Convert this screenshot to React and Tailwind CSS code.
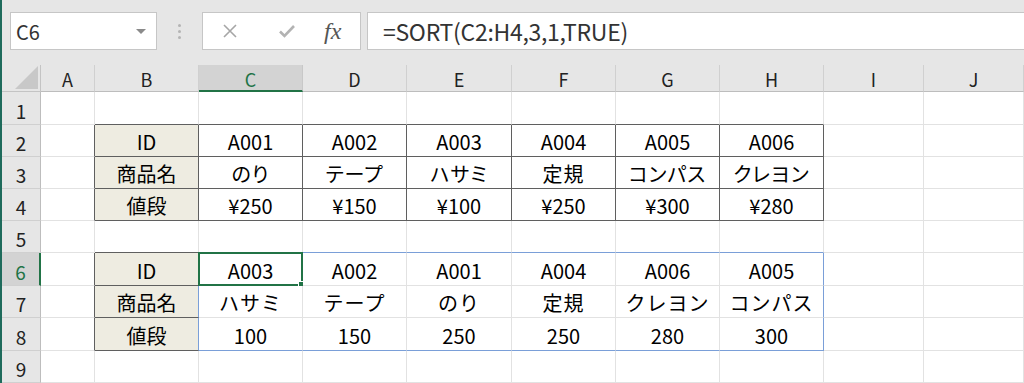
import { Fragment } from 'react'

const COLS = ['A', 'B', 'C', 'D', 'E', 'F', 'G', 'H', 'I', 'J']

const DATA = {
  2: ['ID', 'A001', 'A002', 'A003', 'A004', 'A005', 'A006'],
  3: ['商品名', 'のり', 'テープ', 'ハサミ', '定規', 'コンパス', 'クレヨン'],
  4: ['値段', '¥250', '¥150', '¥100', '¥250', '¥300', '¥280'],
  6: ['ID', 'A003', 'A002', 'A001', 'A004', 'A006', 'A005'],
  7: ['商品名', 'ハサミ', 'テープ', 'のり', '定規', 'クレヨン', 'コンパス'],
  8: ['値段', '100', '150', '250', '250', '280', '300'],
}

const DARK = 'dark'
const BLUE = 'blue'
const LIGHT = 'light'

function rightColor(r, c) {
  if (r >= 2 && r <= 4 && c >= 0 && c <= 7) return DARK
  if (r >= 6 && r <= 8) {
    if (c === 0) return DARK
    if (c === 1 || c === 7) return BLUE
  }
  return LIGHT
}

function bottomColor(r, c) {
  if (r >= 1 && r <= 4 && c >= 1 && c <= 7) return DARK
  if (r >= 5 && r <= 8 && c === 1) return DARK
  if (r === 5 && c >= 2 && c <= 7) return BLUE
  if (r === 8 && c >= 2 && c <= 7) return BLUE
  return LIGHT
}

const R_CLS = {
  dark: 'border-r-[#5f5f5f]',
  blue: 'border-r-[#7a9fd8]',
  light: 'border-r-[#e2e2e2]',
}
const B_CLS = {
  dark: 'border-b-[#5f5f5f]',
  blue: 'border-b-[#7a9fd8]',
  light: 'border-b-[#e2e2e2]',
}

function Cell({ r, c }) {
  const row = DATA[r]
  const text = row && c >= 1 && c <= 7 ? row[c - 1] : null
  const beige = row && c === 1
  const palt = r === 3 && c >= 2
  const selected = r === 6 && c === 2
  return (
    <div
      className={`relative min-h-0 flex items-center justify-center border-r border-b pt-[3px] leading-none text-[20px] text-black ${R_CLS[rightColor(r, c)]} ${B_CLS[bottomColor(r, c)]} ${beige ? 'bg-[#eeece1]' : 'bg-white'} ${palt ? '[font-feature-settings:"palt"] tracking-[1px]' : ''} ${r === 7 && c >= 2 ? 'tracking-[1px]' : ''}`}
    >
      {text}
      {selected && (
        <div className="absolute -top-[1px] -left-[1px] -right-[1px] -bottom-[1px] border-2 border-[#217346]">
          <div className="absolute -right-[5px] -bottom-[5px] w-[8px] h-[8px] bg-[#217346] border border-white" />
        </div>
      )}
    </div>
  )
}

export default function App() {
  return (
    <div
      className="w-[1024px] h-[383px] overflow-hidden bg-white border-l-2 border-[#1f6b5c] flex flex-col"
      style={{ fontFamily: '"Noto Sans CJK JP", "Noto Sans", sans-serif' }}
    >
      {/* formula bar */}
      <div className="h-[65px] shrink-0 bg-[#e6e6e6] flex items-start pt-[12px] pl-[8px]">
        <div className="w-[147px] h-[38px] bg-white border border-[#c6c6c6] flex items-center pl-[5px] pr-[10px]">
          <span className="text-[20px] text-[#333] flex-1 leading-none pt-[2px]">C6</span>
          <span className="w-0 h-0 border-l-[5px] border-r-[5px] border-t-[5px] border-l-transparent border-r-transparent border-t-[#8a8a8a]" />
        </div>
        <div className="w-[45px] h-[38px] flex flex-col items-center justify-center gap-[3px]">
          <span className="w-[3px] h-[3px] rounded-full bg-[#b4b4b4]" />
          <span className="w-[3px] h-[3px] rounded-full bg-[#b4b4b4]" />
          <span className="w-[3px] h-[3px] rounded-full bg-[#b4b4b4]" />
        </div>
        <div className="w-[159px] h-[38px] bg-white border border-[#c6c6c6] flex items-center">
          <svg width="16" height="16" viewBox="0 0 16 16" className="ml-[19px]">
            <path d="M2 2 L14 14 M14 2 L2 14" stroke="#a6a6a6" strokeWidth="1.6" fill="none" />
          </svg>
          <svg width="18" height="16" viewBox="0 0 18 16" className="ml-[40px]">
            <path d="M2 8.5 L6.5 13 L16 3" stroke="#b3b3b3" strokeWidth="2.6" fill="none" />
          </svg>
          <span
            className="ml-[28px] text-[24px] italic text-[#555] leading-none"
            style={{ fontFamily: '"Liberation Serif", "DejaVu Serif", serif' }}
          >
            fx
          </span>
        </div>
        <div className="ml-[6px] flex-1 h-[38px] bg-white border border-[#c6c6c6] border-r-0 flex items-center pl-[15px]">
          <span className="text-[23px] text-[#333] leading-none tracking-[-0.3px]">=SORT(C2:H4,3,1,TRUE)</span>
        </div>
      </div>

      {/* sheet grid */}
      <div className="flex-1 min-h-0 grid grid-cols-[39px_54px_104px_104px_104px_105px_104px_104px_104px_100px_1fr] grid-rows-[27px_33px_32px_32px_32px_32px_33px_32px_33px_32px]">
        <div className="bg-[#e6e6e6] border-r border-b border-[#c4c4c4] flex items-end justify-end pr-[2px] pb-[2px]">
          <svg width="23" height="23" viewBox="0 0 23 23">
            <path d="M23 0 L23 23 L0 23 Z" fill="#c8c8c8" />
          </svg>
        </div>
        {COLS.map((l, i) =>
          i === 2 ? (
            <div key={l} className="bg-[#d3d3d3] border-b-2 border-b-[#217346] border-r border-r-[#c8c8c8] flex items-center justify-center text-[18px] leading-none pt-[2px] text-[#217346]">
              {l}
            </div>
          ) : (
            <div key={l} className="bg-[#e6e6e6] border-b border-b-[#bdbdbd] border-r border-r-[#d0d0d0] flex items-center justify-center text-[18px] leading-none pt-[2px] text-[#222]">
              {l}
            </div>
          )
        )}
        {[1, 2, 3, 4, 5, 6, 7, 8, 9].map(r => (
          <Fragment key={r}>
            {r === 6 ? (
              <div className="min-h-0 bg-[#d3d3d3] border-r-2 border-r-[#217346] border-b border-b-[#d0d0d0] flex items-center justify-center text-[19px] leading-none pt-[4px] text-[#217346]">
                {r}
              </div>
            ) : (
              <div className="min-h-0 bg-[#e6e6e6] border-r border-r-[#bdbdbd] border-b border-b-[#d0d0d0] flex items-center justify-center text-[19px] leading-none pt-[4px] text-[#222]">
                {r}
              </div>
            )}
            {COLS.map((l, c) => (
              <Cell key={l} r={r} c={c} />
            ))}
          </Fragment>
        ))}
      </div>
    </div>
  )
}
